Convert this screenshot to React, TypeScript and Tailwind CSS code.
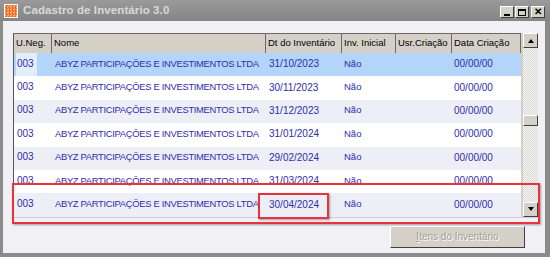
const cols = [
  { label: 'U.Neg.', w: 'w-[38px]' },
  { label: 'Nome', w: 'w-[214px]' },
  { label: 'Dt do Inventário', w: 'w-[76px]' },
  { label: 'Inv. Inicial', w: 'w-[54px]' },
  { label: 'Usr.Criação', w: 'w-[56px]' },
  { label: 'Data Criação', w: 'w-[69px]' },
]

const dates = ['31/10/2023', '30/11/2023', '31/12/2023', '31/01/2024', '29/02/2024', '31/03/2024', '30/04/2024']

const rowBg = (i: number) => (i === 0 ? 'bg-[#b3d5fa]' : i % 2 === 1 ? 'bg-white' : 'bg-[#eeeff6]')

function ScrollBtn({ down }: { down?: boolean }) {
  return (
    <div className="w-[15px] h-[15px] bg-[#d4d0c8] border border-t-white border-l-white border-b-[#404040] border-r-[#404040] flex items-center justify-center">
      <div
        className={
          down
            ? 'w-0 h-0 border-l-[3.5px] border-r-[3.5px] border-t-[4px] border-l-transparent border-r-transparent border-t-black'
            : 'w-0 h-0 border-l-[3.5px] border-r-[3.5px] border-b-[4px] border-l-transparent border-r-transparent border-b-black'
        }
      />
    </div>
  )
}

function WinBtn({ children }: { children: React.ReactNode }) {
  return (
    <div className="w-[14px] h-[12px] bg-[#d4d0c8] border border-t-white border-l-white border-b-[#404040] border-r-[#404040] flex items-center justify-center">
      {children}
    </div>
  )
}

export default function App() {
  return (
    <div className="w-[550px] h-[257px] bg-[#8b8b8b] flex flex-col pl-[3px] pr-[5px] pb-[4px] font-['Liberation_Sans',Arial,sans-serif] relative overflow-hidden">
      {/* title bar */}
      <div className="h-[21px] flex items-center shrink-0 -ml-[3px] -mr-[5px] pl-[4px] pr-[5px] bg-gradient-to-b from-[#9a9a9a] to-[#858585]">
        <div className="w-[14px] h-[14px] bg-white p-[1px] mr-[5px]">
          <div className="w-full h-full bg-[repeating-conic-gradient(#f26a1b_0_25%,#fbb07a_0_50%)] bg-[length:3px_3px]" />
        </div>
        <span className="text-[11.5px] font-bold text-[#d9d9d9] tracking-[0.1px]">Cadastro de Inventário 3.0</span>
        <div className="ml-auto flex gap-[1px] mt-[3px]">
          <WinBtn>
            <div className="w-[6px] h-[2px] bg-black mt-[5px] -ml-[1px]" />
          </WinBtn>
          <WinBtn>
            <div className="w-[8px] h-[7px] border border-black border-t-2" />
          </WinBtn>
          <div className="ml-[1px]">
            <WinBtn>
              <span className="text-[10px] font-bold leading-none text-black">✕</span>
            </WinBtn>
          </div>
        </div>
      </div>

      {/* body */}
      <div className="flex-1 bg-[#f0f0f5] flex flex-col pl-[10px] pt-[12px]">
        <div className="flex w-[525px] border-l border-l-[#555] border-r border-r-[#c8c8c8]">
          <div className="flex flex-col">
            <div className="flex h-[20px] bg-[#d4d0c8]">
              {cols.map((c) => (
                <div
                  key={c.label}
                  className={`${c.w} h-full border-t border-r border-[#6a6a6a] flex items-center pl-[2px] text-[9.5px] text-black whitespace-nowrap overflow-hidden`}
                >
                  {c.label}
                </div>
              ))}
            </div>
            {dates.map((d, i) => (
              <div key={d} className={`flex h-[23.4px] items-center text-[#2f2cae] whitespace-nowrap ${rowBg(i)}`}>
                <div className="w-[38px] h-full flex items-center pl-[2px]">
                  <span className={i === 0 ? 'h-full w-[21px] bg-[#e4eefb] flex items-center pl-[1px] pb-[3px] text-[10px]' : 'pl-[1px] pb-[3px] text-[10px]'}>003</span>
                </div>
                <div className="w-[214px] pl-[3px] pb-[2px] text-[9.4px] tracking-[-0.3px]">ABYZ PARTICIPAÇÕES E INVESTIMENTOS LTDA</div>
                <div className="w-[76px] pl-[3px] pb-[2px] text-[10px]">{d}</div>
                <div className="w-[54px] pl-[2px] pb-[2px] text-[9.5px]">Não</div>
                <div className="w-[56px]" />
                <div className="w-[69px] pl-[2px] pb-[2px] text-[10px]">00/00/00</div>
              </div>
            ))}
          </div>
          {/* scrollbar */}
          <div className="w-[17px] flex flex-col pl-[2px] bg-[#d4d0c8]">
            <ScrollBtn />
            <div className="flex-1 flex flex-col bg-[repeating-conic-gradient(#dcdad5_0_25%,#f4f4f4_0_50%)] bg-[length:2px_2px]">
              <div className="h-[67px]" />
              <div className="w-[15px] h-[11px] bg-[#d4d0c8] border border-t-white border-l-white border-b-[#404040] border-r-[#404040]" />
              <div className="flex-1" />
            </div>
            <ScrollBtn down />
          </div>
        </div>
        <div className="w-[525px] h-px bg-[#cfcfcf]" />

        <div className="flex justify-end w-[512px] mt-[8px]">
          <div className="w-[135px] h-[22px] bg-[#d4d0c8] border border-t-white border-l-white border-b-[#404040] border-r-[#404040] flex items-center justify-center text-[10px] text-[#a39f96] [text-shadow:1px_1px_0_#fff]">
            <span>
              <span className="underline">I</span>tens do Inventário
            </span>
          </div>
        </div>
      </div>

      {/* annotation boxes */}
      <div className="absolute left-[12px] top-[183px] w-[528px] h-[41px] border-2 border-[#e8323c] shadow-[1px_1px_2px_rgba(0,0,0,0.35)]" />
      <div className="absolute left-[258px] top-[193px] w-[71px] h-[26px] border-2 border-[#e8323c] shadow-[1px_1px_2px_rgba(0,0,0,0.35)]" />
    </div>
  )
}
